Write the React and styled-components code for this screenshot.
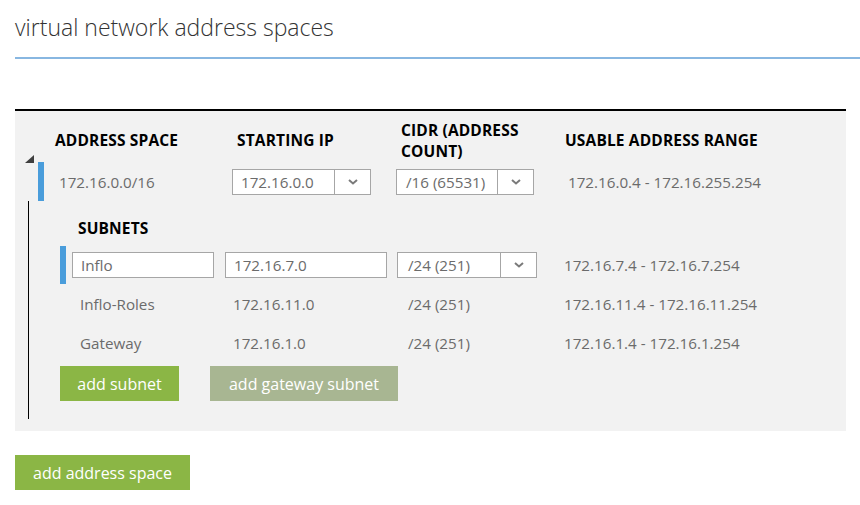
import React from 'react';
import styled, { createGlobalStyle } from 'styled-components';

const GlobalStyle = createGlobalStyle`
	body {
		margin: 0;
		background: #fff;
		font-family: "Open Sans", "Noto Sans", sans-serif;
	}
`;

const Page = styled.div`
	padding: 0 0 0 15px;
	width: 845px;
`;

const Heading = styled.h1`
	margin: 0;
	height: 59px;
	box-sizing: border-box;
	border-bottom: 2px solid #88b7e1;
	font-size: 23px;
	font-weight: 300;
	color: #333;
	line-height: 54px;
`;

const Panel = styled.section`
	margin-top: 50px;
	width: 831px;
	background: #f2f2f2;
	border-top: 2px solid #000;
	padding: 0 0 12px 10px;
	box-sizing: border-box;
	display: flex;
`;

const Gutter = styled.div`
	width: 13px;
	display: flex;
	flex-direction: column;
`;

const Toggle = styled.div`
	margin-top: 44px;
	width: 0;
	height: 0;
	border-left: 9px solid transparent;
	border-bottom: 8px solid #3f3f3f;
`;

const TreeLine = styled.div`
	flex: 1;
	margin: 38px 0 0 3px;
	width: 1px;
	background: #000;
`;

const Content = styled.div`
	flex: 1;
	padding-bottom: 18px;
`;

const HeaderRow = styled.div`
	display: grid;
	grid-template-columns: 182px 164px 164px auto;
	align-items: center;
	height: 51px;
	padding: 8px 0 0 17px;
	box-sizing: border-box;
`;

const HeaderCell = styled.div`
	font-size: 15.5px;
	font-weight: 700;
	letter-spacing: 0.15px;
	color: #000;
	line-height: 21px;
	text-transform: uppercase;
`;

const AddressRow = styled.div`
	display: grid;
	grid-template-columns: 173px 164px 172px auto;
	align-items: center;
	height: 39px;
	border-left: 6px solid #4a9ddb;
	padding-left: 15px;
`;

const Value = styled.div`
	font-size: 15.2px;
	color: #6b6b6b;
	padding-left: ${p => p.$indent || 0}px;
`;

const SelectBox = styled.div`
	display: flex;
	align-items: stretch;
	width: ${p => p.$width}px;
	height: 26px;
	box-sizing: border-box;
	border: 1px solid #a6a6a6;
	background: #fff;
`;

const SelectText = styled.div`
	flex: 1;
	display: flex;
	align-items: center;
	padding-left: ${p => p.$indent}px;
	font-size: 15.2px;
	color: #6b6b6b;
`;

const SelectArrow = styled.div`
	width: 35px;
	border-left: 1px solid #a6a6a6;
	display: flex;
	align-items: center;
	justify-content: center;
`;

const TextInput = styled.div`
	width: ${p => p.$width}px;
	height: 26px;
	box-sizing: border-box;
	border: 1px solid #a6a6a6;
	background: #fff;
	display: flex;
	align-items: center;
	padding-left: 8px;
	font-size: 15.2px;
	color: #6b6b6b;
`;

const Subnets = styled.div`
	padding-left: 22px;
`;

const SubnetsTitle = styled.div`
	height: 45px;
	padding: 8px 0 0 18px;
	box-sizing: border-box;
	display: flex;
	align-items: center;
	font-size: 15.5px;
	font-weight: 700;
	letter-spacing: 0.15px;
	color: #000;
`;

const SubnetList = styled.div`
	display: flex;
	flex-direction: column;
	gap: 1px;
`;

const SubnetRow = styled.div`
	display: grid;
	grid-template-columns: 153px 172px 167px auto;
	align-items: center;
	height: 38px;
	border-left: 6px solid ${p => (p.$active ? '#4a9ddb' : 'transparent')};
	padding-left: 6px;
`;

const Actions = styled.div`
	display: flex;
	gap: 31px;
	margin-top: 4px;
`;

const Button = styled.button`
	height: 35px;
	width: ${p => p.$width}px;
	border: none;
	padding: 0;
	background: ${p => (p.$muted ? '#a8b692' : '#8bb645')};
	color: #fff;
	font-family: "Open Sans", "Noto Sans", sans-serif;
	font-size: 16px;
	cursor: pointer;
`;

const Footer = styled.div`
	margin-top: 24px;
`;

const Chevron = () => (
	<svg width="10" height="6" viewBox="0 0 10 6">
		<polyline points="1,1 5,4.5 9,1" fill="none" stroke="#7a7a7a" strokeWidth="2" />
	</svg>
);

const Select = ({ width, indent, value }) => (
	<SelectBox $width={width}>
		<SelectText $indent={indent}>{value}</SelectText>
		<SelectArrow>
			<Chevron />
		</SelectArrow>
	</SelectBox>
);

const subnets = [
	{ name: 'Inflo-Roles', ip: '172.16.11.0', cidr: '/24 (251)', range: '172.16.11.4 - 172.16.11.254' },
	{ name: 'Gateway', ip: '172.16.1.0', cidr: '/24 (251)', range: '172.16.1.4 - 172.16.1.254' },
];

const App = () => (
	<Page>
		<GlobalStyle />
		<Heading>virtual network address spaces</Heading>
		<Panel>
			<Gutter>
				<Toggle />
				<TreeLine />
			</Gutter>
			<Content>
				<HeaderRow>
					<HeaderCell>Address Space</HeaderCell>
					<HeaderCell>Starting IP</HeaderCell>
					<HeaderCell>
						CIDR (Address
						<br />
						Count)
					</HeaderCell>
					<HeaderCell>Usable Address Range</HeaderCell>
				</HeaderRow>
				<AddressRow>
					<Value>172.16.0.0/16</Value>
					<Select width={139} indent={8} value="172.16.0.0" />
					<Select width={138} indent={9} value="/16 (65531)" />
					<Value>172.16.0.4 - 172.16.255.254</Value>
				</AddressRow>
				<Subnets>
					<SubnetsTitle>SUBNETS</SubnetsTitle>
					<SubnetList>
						<SubnetRow $active>
							<TextInput $width={142}>Inflo</TextInput>
							<TextInput $width={162}>172.16.7.0</TextInput>
							<Select width={140} indent={10} value="/24 (251)" />
							<Value>172.16.7.4 - 172.16.7.254</Value>
						</SubnetRow>
						{subnets.map(s => (
							<SubnetRow key={s.name}>
								<Value $indent={8}>{s.name}</Value>
								<Value $indent={8}>{s.ip}</Value>
								<Value $indent={11}>{s.cidr}</Value>
								<Value>{s.range}</Value>
							</SubnetRow>
						))}
					</SubnetList>
					<Actions>
						<Button $width={119}>add subnet</Button>
						<Button $width={188} $muted>add gateway subnet</Button>
					</Actions>
				</Subnets>
			</Content>
		</Panel>
		<Footer>
			<Button $width={175}>add address space</Button>
		</Footer>
	</Page>
);

export default App;
